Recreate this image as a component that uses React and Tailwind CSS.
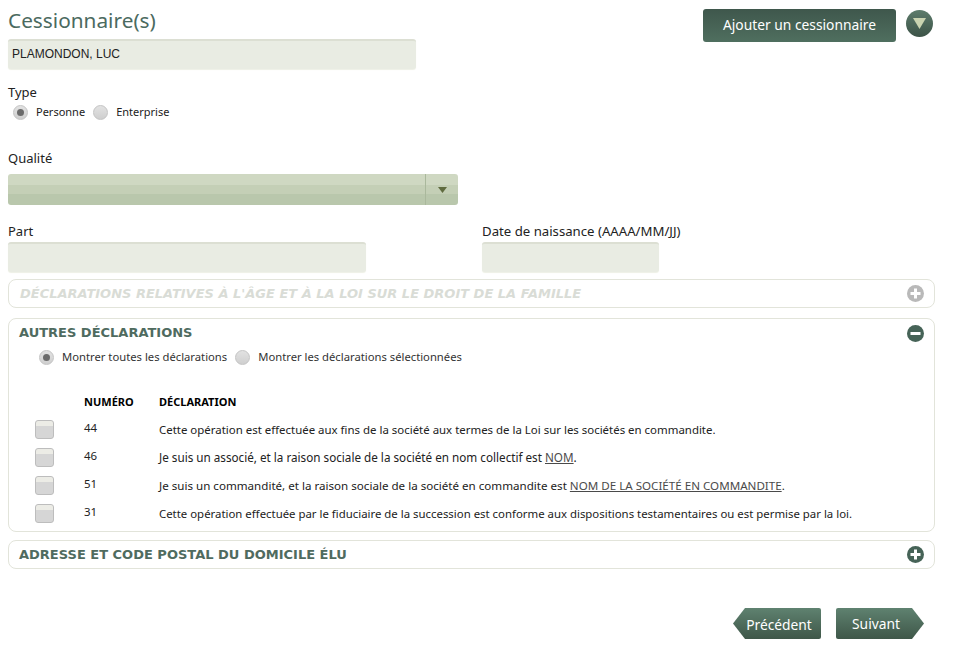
import React from 'react';

const font = "font-['Noto_Sans','DejaVu_Sans',sans-serif]";
const heading = "font-['DejaVu_Sans',sans-serif] text-[13px] font-bold";

const declarations = [
  { num: '44', size: 'text-[11.45px]', text: <>Cette opération est effectuée aux fins de la société aux termes de la Loi sur les sociétés en commandite.</> },
  { num: '46', size: 'text-[11.7px]', text: <>Je suis un associé, et la raison sociale de la société en nom collectif est <u className="text-[#4a4a4a]">NOM</u>.</> },
  { num: '51', size: 'text-[11.6px]', text: <>Je suis un commandité, et la raison sociale de la société en commandite est <u className="text-[#4a4a4a]">NOM DE LA SOCIÉTÉ EN COMMANDITE</u>.</> },
  { num: '31', size: 'text-[11.4px]', text: <>Cette opération effectuée par le fiduciaire de la succession est conforme aux dispositions testamentaires ou est permise par la loi.</> },
];

const Radio = ({ checked }) => (
  <span className="w-[15px] h-[15px] rounded-full border border-[#c4c4c4] bg-gradient-to-b from-[#e2e2e2] to-[#cfcfcf] flex items-center justify-center shrink-0">
    {checked && <span className="w-[7px] h-[7px] rounded-full bg-[#6b6b6b]" />}
  </span>
);

const Circle = ({ minus, color }) => (
  <svg width="17" height="17" viewBox="0 0 17 17">
    <circle cx="8.5" cy="8.5" r="8.5" fill={color} />
    <rect x="3.5" y="7" width="10" height="3" fill="#fff" />
    {!minus && <rect x="7" y="3.5" width="3" height="10" fill="#fff" />}
  </svg>
);

const Field = ({ className, children }) => (
  <div className={`h-[30px] bg-[#e9ece3] rounded-[3px] border-t-2 border-[#dcdfd3] shadow-[0_1px_1px_#eef0e6] flex items-center pl-1 pb-[2px] font-['Liberation_Sans',sans-serif] text-[12px] text-[#222] ${className}`}>
    {children}
  </div>
);

export default function App() {
  return (
    <div className={`${font} w-[967px] h-[654px] bg-white text-[#222] px-2 overflow-hidden`}>
      <div className="flex items-start justify-between h-[39px]">
        <h1 className="text-[20.8px] leading-[26px] mt-[7px] text-[#4b6a60]">Cessionnaire(s)</h1>
        <div className="flex items-start gap-[10px] mt-[9px] mr-[26px]">
          <button className="w-[193px] h-[33px] rounded-[3px] bg-gradient-to-b from-[#3f574c] to-[#4f6f5f] text-white text-[13.8px]">
            Ajouter un cessionnaire
          </button>
          <span className="w-[27px] h-[27px] mt-px rounded-full bg-gradient-to-b from-[#5d7c6c] to-[#3c5347] flex items-center justify-center">
            <svg width="13" height="11" viewBox="0 0 13 11"><path d="M0 0h13L6.5 11z" fill="#c9d3b0" /></svg>
          </span>
        </div>
      </div>

      <Field className="w-[408px]">PLAMONDON, LUC</Field>

      <div className="mt-[15px] text-[13px] leading-[16px]">Type</div>
      <div className="flex items-center mt-[4px] ml-[5px] text-[11px] leading-[16px]">
        <Radio checked />
        <span className="ml-[8px]">Personne</span>
        <span className="ml-[8px]"><Radio /></span>
        <span className="ml-[8px]">Enterprise</span>
      </div>

      <div className="mt-[30px] text-[13px] leading-[16px]">Qualité</div>
      <div className="mt-[8px] w-[450px] h-[31px] rounded-[3px] flex bg-[linear-gradient(#cfd8c2_0,#cfd8c2_35%,#c4cfb6_35%,#c4cfb6_65%,#b9c7ac_65%)]">
        <div className="flex-1" />
        <div className="w-[33px] border-l border-[#aab89c] flex items-center justify-center">
          <svg width="9" height="6" viewBox="0 0 9 6"><path d="M0 0h9L4.5 6z" fill="#5f6b3f" /></svg>
        </div>
      </div>

      <div className="flex mt-[18px]">
        <div className="w-[474px]">
          <div className="text-[13px] leading-[16px]">Part</div>
          <Field className="w-[358px] mt-[3px]" />
        </div>
        <div>
          <div className="text-[13.2px] leading-[16px]">Date de naissance (AAAA/MM/JJ)</div>
          <Field className="w-[177px] mt-[3px]" />
        </div>
      </div>

      <div className="w-[927px] mt-[7px] h-[29px] rounded-[8px] border border-[#e2e4da] flex items-center justify-between pl-[11px] pr-[10px]">
        <span className={`${heading} italic text-[#d9dcd6]`}>DÉCLARATIONS RELATIVES À L'ÂGE ET À LA LOI SUR LE DROIT DE LA FAMILLE</span>
        <Circle color="#b9b9b9" />
      </div>

      <div className="w-[927px] mt-[10px] h-[214px] rounded-[8px] border border-[#e2e4da] pl-[10px] pr-[10px]">
        <div className="flex items-center justify-between h-[28px]">
          <span className={`${heading} text-[#4f6b5f]`}>AUTRES DÉCLARATIONS</span>
          <Circle minus color="#466357" />
        </div>
        <div className="flex items-center mt-[2px] ml-[20px] text-[11.25px] leading-[16px] text-[#333]">
          <Radio checked />
          <span className="ml-[8px]">Montrer toutes les déclarations</span>
          <span className="ml-[8px]"><Radio /></span>
          <span className="ml-[8px]">Montrer les déclarations sélectionnées</span>
        </div>
        <div className="flex mt-[29px] text-[11px] leading-[16px] font-bold text-black">
          <span className="ml-[65px] w-[75px]">NUMÉRO</span>
          <span>DÉCLARATION</span>
        </div>
        <div className="mt-[5px]">
          {declarations.map((d) => (
            <div key={d.num} className={`flex items-center h-[28px] ${d.size}`}>
              <span className="ml-[16px] w-[19px] h-[19px] rounded-[3px] border border-[#bdbdbd] bg-[linear-gradient(#ecece6_0,#ecece6_30%,#d6d6d6_30%)] shrink-0" />
              <span className="ml-[30px] w-[75px] -mt-[2px] shrink-0 text-[11.45px]">{d.num}</span>
              <span className="mt-[1px]">{d.text}</span>
            </div>
          ))}
        </div>
      </div>

      <div className="w-[927px] mt-[8px] h-[29px] rounded-[8px] border border-[#e2e4da] flex items-center justify-between pl-[10px] pr-[10px]">
        <span className={`${heading} text-[#4f6b5f]`}>ADRESSE ET CODE POSTAL DU DOMICILE ÉLU</span>
        <Circle color="#466357" />
      </div>

      <div className="flex justify-end gap-[15px] mt-[39px] mr-[35px]">
        <button className="w-[88px] h-[31px] [clip-path:polygon(12px_0,100%_0,100%_100%,12px_100%,0_50%)] rounded-r-[2px] bg-gradient-to-b from-[#5f8270] to-[#3f5749] text-white text-[13.8px] pl-[4px] pt-[4px]">
          Précédent
        </button>
        <button className="w-[88px] h-[31px] [clip-path:polygon(0_0,calc(100%-12px)_0,100%_50%,calc(100%-12px)_100%,0_100%)] rounded-l-[2px] bg-gradient-to-b from-[#5f8270] to-[#3f5749] text-white text-[13.8px] pr-[8px] pt-[1px]">
          Suivant
        </button>
      </div>
    </div>
  );
}
